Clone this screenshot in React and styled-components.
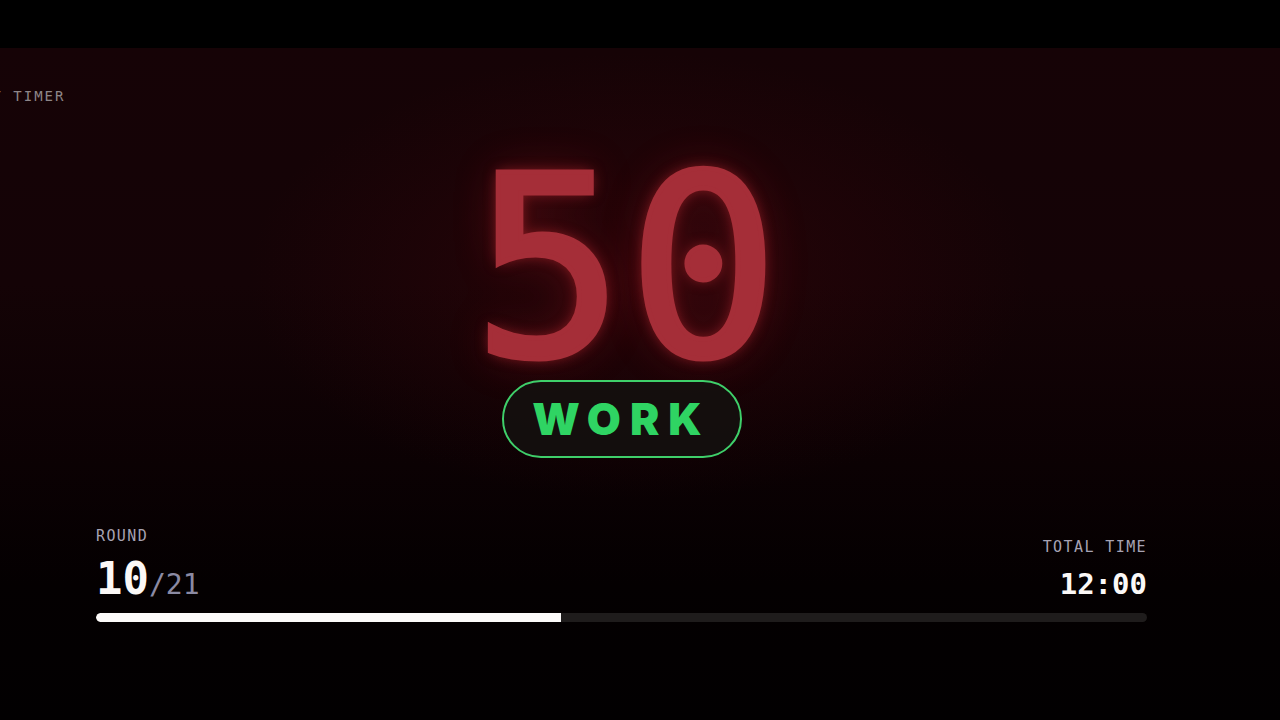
import React from "react";
import styled, { createGlobalStyle } from "styled-components";

const Global = createGlobalStyle`
  html, body { margin: 0; padding: 0; background: #000; }
  body { width: 1280px; height: 720px; overflow: hidden; font-family: "DejaVu Sans Mono", "Liberation Mono", monospace; }
`;

const Page = styled.div`
  width: 1280px;
  height: 720px;
  display: flex;
  flex-direction: column;
  background: #000;
`;

const TopBar = styled.div`
  height: 48px;
  flex: none;
  background: #000;
`;

const Stage = styled.main`
  flex: 1;
  display: flex;
  flex-direction: column;
  overflow: hidden;
  background:
    radial-gradient(ellipse 560px 320px at 50% 34%, rgba(70, 6, 12, 0.4), rgba(0,0,0,0) 70%),
    linear-gradient(to bottom, #160306 0%, #140306 35%, #0b0103 62%, #040001 80%, #020001 100%);
`;

const AppLabel = styled.div`
  margin: 40px 0 0 -91px;
  font-size: 14px;
  line-height: 16px;
  letter-spacing: 2px;
  color: #8e8789;
  white-space: nowrap;
`;

const Center = styled.section`
  display: flex;
  flex-direction: column;
  align-items: center;
  padding-left: 96px;
  padding-right: 133px;
`;

const BigNumber = styled.div`
  margin-top: 64px;
  padding-left: 12px;
  font-family: "DejaVu Sans Mono", monospace;
  font-weight: 400;
  font-size: 252px;
  line-height: 200px;
  letter-spacing: 3px;
  color: #a52e38;
  -webkit-text-stroke: 5px #a52e38;
  text-shadow: 0 0 14px rgba(230, 50, 60, 0.55), 0 0 44px rgba(200, 30, 40, 0.32);
`;

const PhasePill = styled.div`
  margin-top: 12px;
  width: 240px;
  height: 78px;
  box-sizing: border-box;
  border: 2px solid #3fcf6a;
  border-radius: 40px;
  background: rgba(20, 16, 15, 0.85);
  display: flex;
  align-items: center;
  justify-content: center;
  font-family: Inter, "Liberation Sans", sans-serif;
  font-weight: 900;
  font-size: 44px;
  letter-spacing: 9px;
  color: #2fd463;
`;

const Footer = styled.footer`
  margin-top: auto;
  margin-bottom: 98px;
  padding-left: 96px;
  padding-right: 133px;
  display: flex;
  flex-direction: column;
`;

const StatsRow = styled.div`
  display: flex;
  justify-content: space-between;
  align-items: flex-end;
  margin-bottom: 6px;
`;

const Stat = styled.div`
  display: flex;
  flex-direction: column;
  align-items: ${(p) => (p.$right ? "flex-end" : "flex-start")};
`;

const StatLabel = styled.div`
  font-size: 15px;
  line-height: 18px;
  letter-spacing: 1.4px;
  color: #a7a3b3;
  margin-bottom: ${(p) => p.$gap}px;
`;

const RoundValue = styled.div`
  display: flex;
  align-items: baseline;
  line-height: 44px;
`;

const RoundCurrent = styled.span`
  font-size: 44px;
  font-weight: 700;
  color: #fbf8f7;
`;

const RoundTotal = styled.span`
  font-size: 28px;
  color: #8b8aa3;
`;

const TotalTime = styled.div`
  font-size: 29px;
  line-height: 34px;
  font-weight: 700;
  color: #fbf8f7;
  margin-bottom: 6px;
`;

const Track = styled.div`
  height: 9px;
  border-radius: 5px;
  background: #1f1c1c;
  overflow: hidden;
`;

const Fill = styled.div`
  height: 100%;
  background: #fdfbfa;
  border-radius: 5px 0 0 5px;
`;

export default function App() {
  const round = 10;
  const total = 21;
  const progress = 465 / 1051;
  return (
    <>
      <Global />
      <Page>
        <TopBar />
        <Stage>
          <AppLabel>INTENSITY TIMER</AppLabel>
          <Center>
            <BigNumber>50</BigNumber>
            <PhasePill>WORK</PhasePill>
          </Center>
          <Footer>
            <StatsRow>
              <Stat>
                <StatLabel $gap={12}>ROUND</StatLabel>
                <RoundValue>
                  <RoundCurrent>{round}</RoundCurrent>
                  <RoundTotal>/{total}</RoundTotal>
                </RoundValue>
              </Stat>
              <Stat $right>
                <StatLabel $gap={11}>TOTAL TIME</StatLabel>
                <TotalTime>12:00</TotalTime>
              </Stat>
            </StatsRow>
            <Track>
              <Fill style={{ width: `${progress * 100}%` }} />
            </Track>
          </Footer>
        </Stage>
      </Page>
    </>
  );
}
